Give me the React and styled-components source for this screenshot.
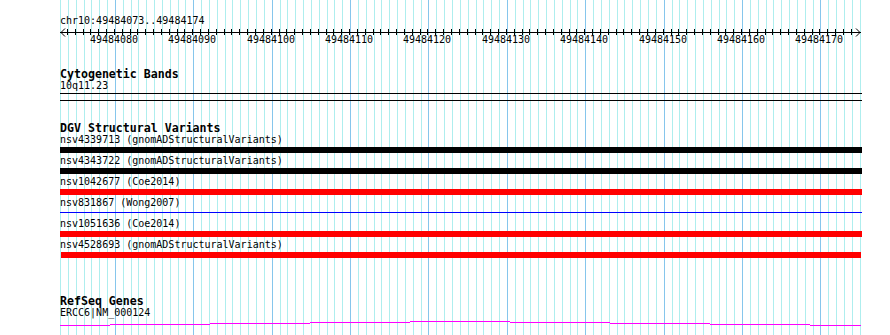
import React from "react";
import styled, { createGlobalStyle } from "styled-components";

const ORIGIN = 60;
const BP = 7.84;
const BASES = 102;
const START = 49484073;
const TRACK_W = 802;

const px = (i) => Math.round(ORIGIN + i * BP);

const Global = createGlobalStyle`
  html, body { margin: 0; padding: 0; background: #fff; }
  body { font-family: "DejaVu Sans Mono", "Liberation Mono", monospace; color: #000; }
`;

const Page = styled.div`
  position: relative;
  width: 890px;
  height: 335px;
  overflow: hidden;
  background: #fff;
`;

const GridLayer = styled.svg`
  position: absolute;
  inset: 0;
  z-index: 0;
`;

const Content = styled.div`
  position: relative;
  z-index: 1;
  padding-left: ${ORIGIN}px;
  display: flex;
  flex-direction: column;
`;

const Location = styled.div`
  margin-top: 15px;
  font-size: 10px;
  line-height: 12px;
  height: 12px;
  white-space: pre;
`;

const RulerSvg = styled.svg`
  display: block;
  margin-left: -${ORIGIN}px;
  margin-top: 0;
  width: 890px;
  height: 18px;
  overflow: visible;
`;

const Track = styled.section`
  display: flex;
  flex-direction: column;
  margin-top: ${(p) => p.$gap}px;
`;

const TrackTitle = styled.h2`
  margin: 0;
  font-size: 11.6px;
  font-weight: bold;
  line-height: 12px;
  height: 12px;
  white-space: pre;
`;

const FeatureLabel = styled.div`
  font-size: 10px;
  line-height: 12px;
  height: 12px;
  white-space: pre;
`;

const BandBox = styled.div`
  margin-top: 1px;
  width: ${TRACK_W}px;
  height: 6px;
  border-top: 1px solid #000;
  border-bottom: 1px solid #000;
`;

const FeatureRow = styled.div`
  display: flex;
  flex-direction: column;
  height: 21px;
`;

const BarSlot = styled.div`
  margin-top: 1px;
  height: 6px;
  display: flex;
  align-items: ${(p) => (p.$thin ? "flex-start" : "stretch")};
`;

const Bar = styled.div`
  width: ${(p) => p.$w}px;
  margin-left: ${(p) => p.$x || 0}px;
  height: ${(p) => (p.$thin ? "1px" : "6px")};
  margin-top: ${(p) => (p.$thin ? "2px" : "0")};
  background: ${(p) => p.$color};
`;

const GeneSvg = styled.svg`
  display: block;
  margin-top: 1px;
  width: ${TRACK_W}px;
  height: 8px;
`;

const variants = [
  { id: "nsv4339713", src: "gnomADStructuralVariants", color: "#000000" },
  { id: "nsv4343722", src: "gnomADStructuralVariants", color: "#000000" },
  { id: "nsv1042677", src: "Coe2014", color: "#ff0000" },
  { id: "nsv831867", src: "Wong2007", color: "#0000ff", thin: true },
  { id: "nsv1051636", src: "Coe2014", color: "#ff0000" },
  { id: "nsv4528693", src: "gnomADStructuralVariants", color: "#ff0000", x: 1, w: 800 },
];

function Grid() {
  const lines = [];
  for (let i = 0; i <= BASES; i++) {
    const major = (i - 7) % 10 === 0;
    const x = px(i) + 0.5;
    lines.push(
      <line
        key={i}
        x1={x}
        x2={x}
        y1={0}
        y2={335}
        stroke={major ? "#86c6ec" : "#aeeeee"}
        strokeWidth={1}
      />
    );
  }
  return (
    <GridLayer width="890" height="335" shapeRendering="crispEdges">
      {lines}
    </GridLayer>
  );
}

function Ruler() {
  const ticks = [];
  const labels = [];
  for (let i = 1; i < BASES; i++) {
    const x = px(i) - 0.5;
    ticks.push(<line key={i} x1={x} x2={x} y1={2} y2={8} stroke="#000" strokeWidth={1} />);
    if ((i - 7) % 10 === 0) {
      labels.push(
        <text
          key={"l" + i}
          x={px(i) - 1}
          y={16}
          textAnchor="middle"
          fontFamily='"DejaVu Sans Mono", monospace'
          fontSize="10"
          fill="#000"
        >
          {START + i}
        </text>
      );
    }
  }
  const end = px(BASES) + 1;
  return (
    <RulerSvg viewBox="0 0 890 18">
      <g shapeRendering="crispEdges">
        <line x1={ORIGIN} x2={end} y1={5.5} y2={5.5} stroke="#000" strokeWidth={1} />
        {ticks}
      </g>
      <polyline points={`${ORIGIN + 5},1.5 ${ORIGIN + 1},5.5 ${ORIGIN + 5},9.5`} fill="none" stroke="#000" strokeWidth={1} />
      <polyline points={`${end - 5},1.5 ${end - 1},5.5 ${end - 5},9.5`} fill="none" stroke="#000" strokeWidth={1} />
      {labels}
    </RulerSvg>
  );
}

function GeneLine() {
  const levels = [5, 4, 3, 2, 1, 2, 3, 4, 5];
  const xs = [0, 50, 150, 250, 350, 450, 550, 650, 750, 801];
  const segs = levels.map((lv, k) => (
    <line key={k} x1={xs[k]} x2={xs[k + 1]} y1={lv + 0.5} y2={lv + 0.5} stroke="#ff00ff" strokeWidth={1} />
  ));
  return (
    <GeneSvg viewBox={`0 0 ${TRACK_W} 8`} shapeRendering="crispEdges">
      {segs}
    </GeneSvg>
  );
}

export default function App() {
  return (
    <>
      <Global />
      <Page>
        <Grid />
        <Content>
          <Location>chr10:49484073..49484174</Location>
          <Ruler />
          <Track $gap={23}>
            <TrackTitle>Cytogenetic Bands</TrackTitle>
            <FeatureLabel>10q11.23</FeatureLabel>
            <BandBox />
          </Track>
          <Track $gap={21}>
            <TrackTitle>DGV Structural Variants</TrackTitle>
            {variants.map((v) => (
              <FeatureRow key={v.id}>
                <FeatureLabel>{`${v.id} (${v.src})`}</FeatureLabel>
                <BarSlot $thin={v.thin}>
                  <Bar $color={v.color} $thin={v.thin} $x={v.x} $w={v.w || TRACK_W} />
                </BarSlot>
              </FeatureRow>
            ))}
          </Track>
          <Track $gap={35}>
            <TrackTitle>RefSeq Genes</TrackTitle>
            <FeatureLabel>ERCC6|NM_000124</FeatureLabel>
            <GeneLine />
          </Track>
        </Content>
      </Page>
    </>
  );
}
